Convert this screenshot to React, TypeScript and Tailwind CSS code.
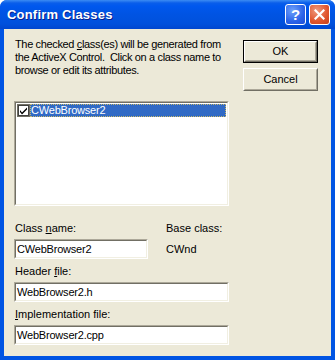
import React from 'react';

const font = "font-['Liberation_Sans',Arial,sans-serif]";

// classic sunken edit box
const Field: React.FC<{ value: string; className?: string }> = ({ value, className }) => (
  <div className={`h-[20px] border border-t-[#ACA899] border-l-[#ACA899] border-b-white border-r-white ${className ?? ''}`}>
    <div className="h-full border border-t-[#716F64] border-l-[#716F64] border-b-[#F1EFE2] border-r-[#F1EFE2] bg-white pl-[1px] text-[11px] leading-[16px] tracking-[-0.2px] text-black">
      {value}
    </div>
  </div>
);

const Button: React.FC<{ label: React.ReactNode; isDefault?: boolean }> = ({ label, isDefault }) => (
  <div className={`h-[23px] w-[75px] ${isDefault ? 'border border-black' : ''}`}>
    <div className="h-full border border-t-white border-l-white border-b-[#716F64] border-r-[#716F64]">
      <div className="flex h-full items-center justify-center border border-t-[#ECE9D8] border-l-[#ECE9D8] border-b-[#ACA899] border-r-[#ACA899] bg-[#ECE9D8] text-[11px] text-black">
        {label}
      </div>
    </div>
  </div>
);

export default function App() {
  return (
    <div className={`h-[360px] w-[335px] bg-white ${font}`}>
      <div className="flex h-full w-full flex-col overflow-hidden rounded-t-[7px] bg-[#0054E3]">
        {/* Title bar */}
        <div className="flex h-[29px] shrink-0 items-center bg-[linear-gradient(to_bottom,#3C8CF3_0px,#0A5EEA_3px,#0058EE_6px,#0054E3_14px,#0050DC_24px,#0046CF_29px)] pl-[7px] pr-[5px]">
          <span className="flex-1 text-[13px] font-bold tracking-[0.2px] text-white [text-shadow:1px_1px_0_#0A1E8C]">
            Confirm Classes
          </span>
          <div className="mr-[3px] flex h-[21px] w-[21px] items-center justify-center rounded-[3px] border border-white bg-[radial-gradient(circle_at_35%_30%,#6FA2FB,#2B63E8_60%,#1C4ED8)]">
            <span className="text-[15px] font-bold leading-none text-white">?</span>
          </div>
          <div className="flex h-[21px] w-[21px] items-center justify-center rounded-[3px] border border-white bg-[radial-gradient(circle_at_35%_30%,#EE9A7E,#E0542C_60%,#C7401C)]">
            <svg width="11" height="11" viewBox="0 0 11 11">
              <path d="M1.5 1.5 L9.5 9.5 M9.5 1.5 L1.5 9.5" stroke="white" strokeWidth="2.2" strokeLinecap="square" />
            </svg>
          </div>
        </div>

        {/* Client area */}
        <div className="mx-[4px] mb-[4px] flex flex-1 bg-[#ECE9D8] text-[11px] text-black">
          <div className="ml-[10px] w-[215px]">
            <p className="mt-[9px] whitespace-nowrap pl-[1px] leading-[13px] tracking-[-0.35px]">
              The checked <span className="underline">c</span>lass(es) will be generated from
              <br />
              the ActiveX Control.&nbsp; Click on a class name to
              <br />
              browse or edit its attributes.
            </p>

            {/* List box */}
            <div className="mt-[24px] h-[105px] border border-t-[#ACA899] border-l-[#ACA899] border-b-white border-r-white">
              <div className="h-full border border-t-[#716F64] border-l-[#716F64] border-b-[#F1EFE2] border-r-[#F1EFE2] bg-white pt-[1px]">
                <div className="flex h-[13px] items-center">
                  <svg width="13" height="13" viewBox="0 0 13 13" className="ml-[1px] shrink-0">
                    <rect x="0.5" y="0.5" width="12" height="12" fill="white" stroke="#716F64" />
                    <rect x="1.5" y="1.5" width="10" height="10" fill="white" stroke="#404040" />
                    <path d="M3 6 L5 8.5 L10 3.5 L10 5.5 L5 10.5 L3 8 Z" fill="black" />
                  </svg>
                  <div className="mr-[1px] h-[13px] flex-1 border border-dotted border-[#C8B86A] bg-[#316AC5] text-[11px] leading-[11px] tracking-[-0.2px] text-white">
                    CWebBrowser2
                  </div>
                </div>
              </div>
            </div>

            <div className="mt-[16px] flex leading-[13px]">
              <div className="w-[152px] pl-[1px]">
                Class <span className="underline">n</span>ame:
              </div>
              <div>Base class:</div>
            </div>
            <div className="mt-[4px] flex items-center">
              <Field value="CWebBrowser2" className="w-[134px]" />
              <div className="ml-[18px]">CWnd</div>
            </div>

            <div className="mt-[6px] pl-[1px] leading-[13px]">
              Header <span className="underline">f</span>ile:
            </div>
            <Field value="WebBrowser2.h" className="mt-[4px]" />

            <div className="mt-[6px] pl-[1px] leading-[13px]">
              <span className="underline">I</span>mplementation file:
            </div>
            <Field value="WebBrowser2.cpp" className="mt-[4px]" />
          </div>

          <div className="ml-[14px] mt-[11px] flex flex-col gap-[5px]">
            <Button label="OK" isDefault />
            <Button label="Cancel" />
          </div>
        </div>
      </div>
    </div>
  );
}
